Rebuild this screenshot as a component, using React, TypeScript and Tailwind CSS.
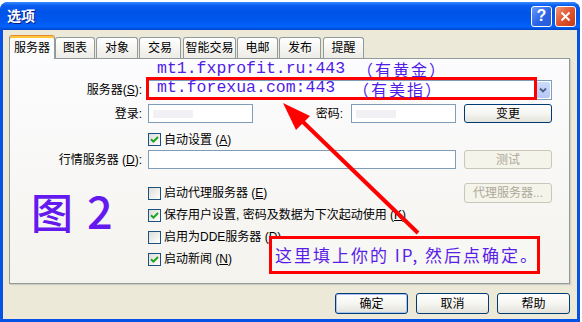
import type { ReactNode } from "react";

const tabs = [
  { label: "服务器", w: "w-[46px]", ml: "ml-0", active: true },
  { label: "图表", w: "w-[40px]", ml: "ml-0" },
  { label: "对象", w: "w-[42px]", ml: "ml-[1px]" },
  { label: "交易", w: "w-[42px]", ml: "ml-[1px]" },
  { label: "智能交易", w: "w-[53px]", ml: "ml-[2px]" },
  { label: "电邮", w: "w-[41px]", ml: "ml-[1px]" },
  { label: "发布", w: "w-[42px]", ml: "ml-[1px]" },
  { label: "提醒", w: "w-[41px]", ml: "ml-[2px]" },
];

function Key({ k }: { k: string }) {
  return (
    <>
      (<span className="underline">{k}</span>)
    </>
  );
}

function Check({ checked }: { checked?: boolean }) {
  return (
    <span className="flex h-[13px] w-[13px] shrink-0 items-center justify-center border border-[#1C5180] bg-[linear-gradient(135deg,#DCDCD7,#FFFFFF)]">
      {checked ? (
        <svg width="9" height="9" viewBox="0 0 9 9" aria-hidden="true">
          <path d="M1 4.2 L3.4 6.6 L8 2" stroke="#21A121" strokeWidth="2" fill="none" />
        </svg>
      ) : null}
    </span>
  );
}

function XpButton({
  children,
  disabled,
  isDefault,
  className,
}: {
  children: ReactNode;
  disabled?: boolean;
  isDefault?: boolean;
  className: string;
}) {
  const base = "flex shrink-0 items-center justify-center rounded-[3px] border text-[12px]";
  const look = disabled
    ? "border-[#C9C7BA] bg-[#F5F4EA] text-[#ACA899]"
    : "border-[#003C74] bg-[linear-gradient(180deg,#FFFFFF_0%,#F4F4F0_55%,#E3E2DA_100%)] text-black";
  const ring = isDefault ? "shadow-[inset_0_0_0_1px_#A9C3F0]" : "";
  return <div className={`${base} ${look} ${ring} ${className}`}>{children}</div>;
}

function Input({ className, blur }: { className: string; blur?: boolean }) {
  return (
    <div className={`flex shrink-0 items-center border border-[#7F9DB9] bg-white ${className}`}>
      {blur ? <span className="ml-[4px] h-[8px] w-[40px] bg-[#F0F0F5]" /> : null}
    </div>
  );
}

function CheckRow({ checked, children }: { checked?: boolean; children: ReactNode }) {
  return (
    <div className="flex items-center gap-[3px] whitespace-nowrap">
      <Check checked={checked} />
      <span className="leading-none">{children}</span>
    </div>
  );
}

export default function App() {
  return (
    <div className="h-[322px] w-[582px] bg-white pt-[2px] font-['Liberation_Sans','Noto_Sans_CJK_SC',sans-serif] text-[12px] text-black">
      <div className="relative flex h-[320px] w-[580px] flex-col overflow-hidden rounded-t-[8px] bg-[#0553E6]">
        {/* title bar */}
        <div className="flex h-[28px] shrink-0 items-center bg-[linear-gradient(180deg,#3A8CFF_0%,#0A5EF0_12%,#0053E8_35%,#0057EE_65%,#0062FA_88%,#0050DC_96%,#0040C8_100%)] pl-[7px] pr-[4px]">
          <span className="text-[14px] font-bold text-white [text-shadow:1px_1px_0_#0A1883]">选项</span>
          <div className="ml-auto flex gap-[3px]">
            <div className="flex h-[21px] w-[21px] items-center justify-center rounded-[3px] border border-white bg-[linear-gradient(135deg,#6A9BFA,#2B63E6_55%,#2A5AD2)] text-[16px] font-bold leading-none text-white">
              ?
            </div>
            <div className="flex h-[21px] w-[21px] items-center justify-center rounded-[3px] border border-white bg-[linear-gradient(135deg,#F19878,#E0542E_50%,#C53A18)]">
              <svg width="11" height="11" viewBox="0 0 11 11" aria-hidden="true">
                <path d="M1.5 1.5 L9.5 9.5 M9.5 1.5 L1.5 9.5" stroke="white" strokeWidth="2" />
              </svg>
            </div>
          </div>
        </div>

        {/* body */}
        <div className="mx-[3px] mb-[3px] flex flex-1 flex-col bg-[#ECE9D8] pl-[6px] pr-[7px] pt-[5px]">
          <div className="flex h-[23px] items-end">
            {tabs.map((t) =>
              t.active ? (
                <div
                  key={t.label}
                  className={`relative z-10 -mb-px flex h-[24px] items-center justify-center rounded-t-[3px] border border-b-0 border-[#919B9C] border-t-[#E68B2C] bg-[#FCFCFE] shadow-[inset_0_2px_0_#FFC73C] ${t.w} ${t.ml}`}
                >
                  {t.label}
                </div>
              ) : (
                <div
                  key={t.label}
                  className={`flex h-[21px] items-center justify-center rounded-t-[3px] border border-b-0 border-[#919B9C] bg-[linear-gradient(180deg,#FFFFFF,#ECEBE6)] ${t.w} ${t.ml}`}
                >
                  {t.label}
                </div>
              ),
            )}
          </div>

          {/* tab panel */}
          <div className="relative flex h-[226px] flex-col border border-[#919B9C] bg-[linear-gradient(180deg,#FCFCFE,#F4F3EE)] pt-[21px] shadow-[1px_1px_0_#D0CEBF,2px_2px_0_#E6E3D4]">
            <div className="flex h-[20px] items-center">
              <span className="w-[138px] shrink-0 pr-[6px] text-right">
                服务器<Key k="S" />:
              </span>
              <div className="flex h-[20px] w-[404px] shrink-0 justify-end border border-[#7F9DB9] bg-white p-px">
                <div className="flex w-[15px] items-center justify-center rounded-[2px] bg-[linear-gradient(180deg,#CCDBFC,#B4C8F6)]">
                  <svg width="8" height="6" viewBox="0 0 8 6" aria-hidden="true">
                    <path d="M1 1.5 L4 4.5 L7 1.5" stroke="#4D6185" strokeWidth="1.8" fill="none" />
                  </svg>
                </div>
              </div>
            </div>

            <div className="mt-[4px] flex h-[19px] items-center">
              <span className="w-[138px] shrink-0 pr-[6px] text-right">登录:</span>
              <Input className="h-[19px] w-[105px]" blur />
              <span className="w-[98px] shrink-0 pr-[8px] text-right">密码:</span>
              <Input className="h-[19px] w-[105px]" blur />
              <XpButton className="ml-[8px] h-[19px] w-[88px]">变更</XpButton>
            </div>

            <div className="ml-[138px] mt-[10px] flex h-[13px] items-center">
              <CheckRow checked>
                自动设置 <Key k="A" />
              </CheckRow>
            </div>

            <div className="mt-[4px] flex h-[19px] items-center">
              <span className="w-[138px] shrink-0 pr-[6px] text-right">
                行情服务器 <Key k="D" />:
              </span>
              <Input className="h-[19px] w-[308px]" />
              <XpButton disabled className="ml-[8px] h-[19px] w-[88px]">
                测试
              </XpButton>
            </div>

            <div className="ml-[138px] mt-[13px] flex flex-col">
              <div className="flex h-[22px] items-center">
                <div className="w-[316px]">
                  <CheckRow>
                    启动代理服务器 <Key k="E" />
                  </CheckRow>
                </div>
                <XpButton disabled className="h-[20px] w-[88px]">
                  代理服务器...
                </XpButton>
              </div>
              <div className="flex h-[22px] items-center">
                <CheckRow checked>
                  保存用户设置, 密码及数据为下次起动使用 <Key k="K" />
                </CheckRow>
              </div>
              <div className="flex h-[22px] items-center">
                <CheckRow>
                  启用为DDE服务器 <Key k="D" />
                </CheckRow>
              </div>
              <div className="flex h-[22px] items-center">
                <CheckRow checked>
                  启动新闻 <Key k="N" />
                </CheckRow>
              </div>
            </div>

            {/* annotations */}
            <div className="absolute left-[147px] top-[2px] flex h-[16px] items-center whitespace-nowrap leading-none text-[#4F1DE6]">
              <span className="inline-block w-[200px] font-['Liberation_Mono',monospace] text-[16.5px]">mt1.fxprofit.ru:443</span>
              <span className="font-['Noto_Sans_CJK_SC',sans-serif] text-[16px] tracking-[2px]">（有黄金）</span>
            </div>
            <div className="absolute left-[136px] top-[18px] flex h-[23px] w-[391px] items-center whitespace-nowrap border-[3px] border-[#FF0000] pl-[8px] leading-none text-[#4F1DE6]">
              <span className="inline-block w-[196px] font-['Liberation_Mono',monospace] text-[16.5px]">mt.forexua.com:443</span>
              <span className="font-['Noto_Sans_CJK_SC',sans-serif] text-[16px] tracking-[2px]">（有美指）</span>
            </div>
            <div className="absolute left-[21px] top-[128px] flex items-baseline whitespace-nowrap font-['Noto_Sans_CJK_SC',sans-serif] font-medium leading-none text-[#6419EE]">
              <span className="text-[42px]">图</span>
              <span className="ml-[14px] text-[45px]">2</span>
            </div>
            <div className="absolute left-[259px] top-[177px] flex h-[38px] w-[271px] items-center whitespace-nowrap border-[3px] border-[#FF0000] bg-[#F7F7F4] pl-[3px] font-['Noto_Sans_CJK_SC',sans-serif] text-[17px] tracking-[2px] text-[#5A1EE6]">
              这里填上你的 IP, 然后点确定。
            </div>
          </div>

          <div className="mt-[9px] flex justify-end gap-[8px]">
            <XpButton isDefault className="h-[21px] w-[73px]">
              确定
            </XpButton>
            <XpButton className="h-[21px] w-[73px]">取消</XpButton>
            <XpButton className="h-[21px] w-[73px]">帮助</XpButton>
          </div>
        </div>

        {/* red arrow */}
        <svg
          className="pointer-events-none absolute left-0 top-[-2px]"
          width="580"
          height="322"
          viewBox="0 0 580 322"
          aria-hidden="true"
        >
          <line x1="418" y1="233" x2="302" y2="121" stroke="#FF0000" strokeWidth="4" />
          <polygon points="283,103 310,116 296,130" fill="#FF0000" />
        </svg>
      </div>
    </div>
  );
}
